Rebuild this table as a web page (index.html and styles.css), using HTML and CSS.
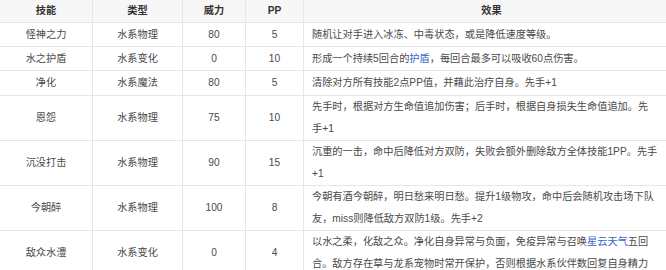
FILE: index.html
```html
<!DOCTYPE html>
<html lang="zh">
<head>
<meta charset="utf-8">
<link rel="stylesheet" href="styles.css">
</head>
<body>
<table class="skills">
  <colgroup>
    <col class="c-name"><col class="c-type"><col class="c-power"><col class="c-pp"><col class="c-effect">
  </colgroup>
  <thead>
    <tr><th>技能</th><th>类型</th><th>威力</th><th>PP</th><th>效果</th></tr>
  </thead>
  <tbody>
    <tr class="one"><td>怪神之力</td><td>水系物理</td><td>80</td><td>5</td><td class="effect">随机让对手进入冰冻、中毒状态，或是降低速度等级。</td></tr>
    <tr class="one"><td>水之护盾</td><td>水系变化</td><td>0</td><td>10</td><td class="effect">形成一个持续5回合的<a class="link">护盾</a>，每回合最多可以吸收60点伤害。</td></tr>
    <tr class="one last"><td>净化</td><td>水系魔法</td><td>80</td><td>5</td><td class="effect">清除对方所有技能2点PP值，并藉此治疗自身。先手+1</td></tr>
    <tr><td>恩怨</td><td>水系物理</td><td>75</td><td>10</td><td class="effect">先手时，根据对方生命值追加伤害；后手时，根据自身损失生命值追加。先手+1</td></tr>
    <tr><td>沉没打击</td><td>水系物理</td><td>90</td><td>15</td><td class="effect">沉重的一击，命中后降低对方双防，失败会额外删除敌方全体技能1PP。先手+1</td></tr>
    <tr><td>今朝醉</td><td>水系物理</td><td>100</td><td>8</td><td class="effect">今朝有酒今朝醉，明日愁来明日愁。提升1级物攻，命中后会随机攻击场下队友，miss则降低敌方双防1级。先手+2</td></tr>
    <tr><td>敌众水澧</td><td>水系变化</td><td>0</td><td>4</td><td class="effect">以水之柔，化敌之众。净化自身异常与负面，免疫异常与召唤<a class="link">星云天气</a>五回合。敌方存在草与龙系宠物时常开保护，否则根据水系伙伴数回复自身精力</td></tr>
  </tbody>
</table>
</body>
</html>
```

FILE: styles.css
```css
html, body {
  margin: 0;
  padding: 0;
  background: #ffffff;
}
body {
  overflow: hidden;
}
.skills {
  border-collapse: collapse;
  table-layout: fixed;
  width: 680px;
  margin: -1px 0 0 -1px;
  font-family: "Liberation Sans", "Noto Sans CJK SC", sans-serif;
  font-size: 10.2px;
  color: #4a4a4a;
}
.c-name { width: 93px; }
.c-type { width: 90px; }
.c-power { width: 63px; }
.c-pp { width: 58px; }
.c-effect { width: 376px; }
.skills th,
.skills td {
  border: 1px solid #e6e6e6;
  text-align: center;
  padding: 0 8px;
  line-height: 22px;
  vertical-align: middle;
}
.skills th {
  background: #f7f7f7;
  color: #333333;
  font-weight: bold;
  line-height: 22px;
}
.skills .one td {
  padding-top: 1px;
}
.skills .last td {
  padding-top: 1px;
  padding-bottom: 1px;
}
.skills td.effect {
  text-align: left;
  padding-left: 8px;
  padding-right: 21px;
}
.link {
  color: #3366cc;
  text-decoration: none;
}
```
